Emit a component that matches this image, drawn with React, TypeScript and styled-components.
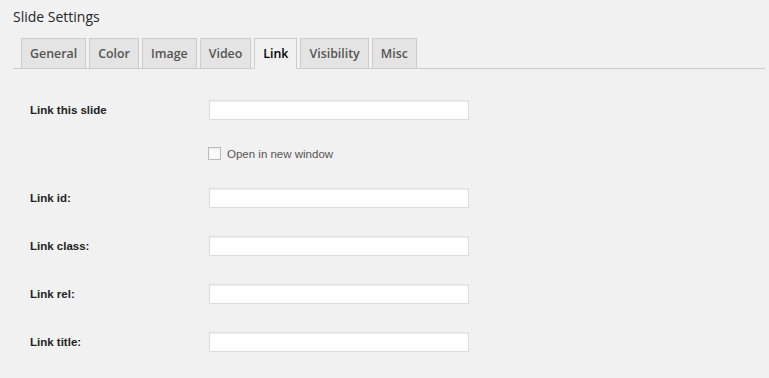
import styled, { createGlobalStyle } from 'styled-components'

const GlobalStyle = createGlobalStyle`
  html, body {
    margin: 0;
    padding: 0;
    background: #f1f1f1;
  }
  body {
    font-family: 'Liberation Sans', Arial, sans-serif;
    color: #222;
  }
`

const Page = styled.div`
  padding: 8px 4px 20px 13px;
`

const Title = styled.h2`
  margin: 0;
  font-family: 'Open Sans', 'Noto Sans', sans-serif;
  font-size: 14px;
  font-weight: 400;
  line-height: 18px;
  color: #23282d;
`

const TabBar = styled.div`
  display: flex;
  gap: 3px;
  margin-top: 12px;
  padding-left: 8px;
  border-bottom: 1px solid #ccc;
`

const Tab = styled.div<{ $active?: boolean }>`
  display: flex;
  align-items: center;
  box-sizing: border-box;
  height: 31px;
  padding: 0 8px;
  margin-bottom: -1px;
  border: 1px solid #ccc;
  border-bottom-color: ${(p) => (p.$active ? '#f1f1f1' : '#ccc')};
  background: ${(p) => (p.$active ? '#f1f1f1' : '#e4e4e4')};
  color: ${(p) => (p.$active ? '#000' : '#555')};
  font-family: 'Open Sans', 'Noto Sans', sans-serif;
  font-size: 12.4px;
  font-weight: 600;
  cursor: pointer;
`

const Form = styled.div`
  display: flex;
  flex-direction: column;
  padding: 31px 0 0 17px;
`

const Row = styled.div<{ $gap: number }>`
  display: grid;
  grid-template-columns: 179px 260px;
  align-items: center;
  margin-top: ${(p) => p.$gap}px;
  &:first-child {
    margin-top: 0;
  }
`

const Label = styled.label`
  font-size: 11.5px;
  font-weight: 700;
  color: #222;
`

const TextInput = styled.input`
  box-sizing: border-box;
  width: 260px;
  height: 20px;
  margin: 0;
  border: 1px solid #ddd;
  background: #fff;
  box-shadow: inset 0 1px 2px rgba(0, 0, 0, 0.07);
  outline: none;
`

const CheckLabel = styled.label`
  grid-column: 2;
  display: flex;
  align-items: center;
  gap: 6px;
  height: 13px;
  margin-left: -1px;
  font-size: 11.5px;
  color: #555;
`

const CheckText = styled.span`
  padding-top: 2px;
  line-height: 11px;
`

const Box = styled.span`
  box-sizing: border-box;
  width: 13px;
  height: 13px;
  border: 1px solid #bbb;
  background: #fafafa;
  box-shadow: inset 0 1px 2px rgba(0, 0, 0, 0.08);
`

const tabs = ['General', 'Color', 'Image', 'Video', 'Link', 'Visibility', 'Misc']
const fields = ['Link id:', 'Link class:', 'Link rel:', 'Link title:']

const App = () => {
  return (
    <Page>
      <GlobalStyle />
      <Title>Slide Settings</Title>
      <TabBar>
        {tabs.map((t) => (
          <Tab key={t} $active={t === 'Link'}>
            {t}
          </Tab>
        ))}
      </TabBar>
      <Form>
        <Row $gap={0}>
          <Label>Link this slide</Label>
          <TextInput type="text" />
        </Row>
        <Row $gap={27}>
          <CheckLabel>
            <Box />
            <CheckText>Open in new window</CheckText>
          </CheckLabel>
        </Row>
        {fields.map((f) => (
          <Row key={f} $gap={28}>
            <Label>{f}</Label>
            <TextInput type="text" />
          </Row>
        ))}
      </Form>
    </Page>
  )
}

export default App
